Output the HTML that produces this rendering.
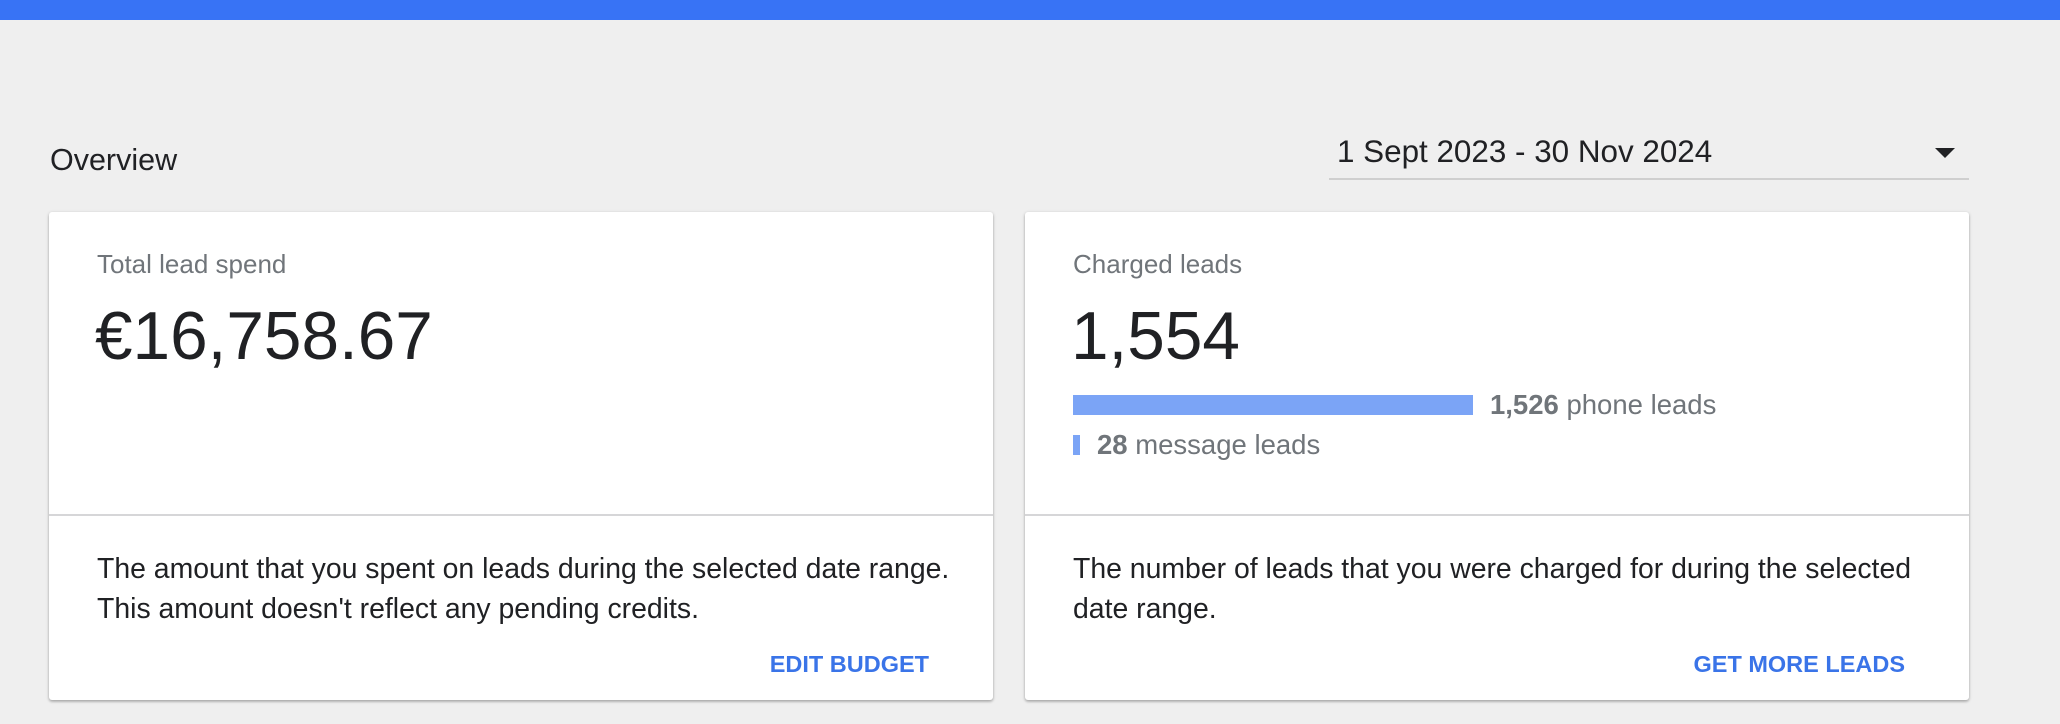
<!DOCTYPE html>
<html><head><meta charset="utf-8"><style>
*{margin:0;padding:0;box-sizing:border-box}
body{width:2060px;height:724px;background:#efefef;font-family:"Liberation Sans",Arial,sans-serif;position:relative;overflow:hidden}
.top{position:absolute;left:0;top:0;width:2060px;height:20px;background:#3873f5}
.abs{position:absolute;white-space:nowrap}
.card{position:absolute;top:212px;height:488px;background:#fff;border-radius:3px;box-shadow:0 1px 3px rgba(0,0,0,.25),0 2px 2px rgba(0,0,0,.12)}
.div{position:absolute;left:0;right:0;top:302px;height:2px;background:#d6d6d8}
.lbl{font-size:26px;color:#70757a}
.big{font-size:67.5px;color:#202124}
.desc{font-size:28.4px;color:#202124;line-height:40px}
.link{font-size:23.5px;color:#3a74e8;font-weight:bold}
.gray{font-size:27.5px;color:#70757a}
</style></head><body>
<div class="top"></div>
<div class="abs" style="left:50px;top:143px;font-size:30.5px;color:#202124">Overview</div>
<div class="abs" style="left:1337px;top:134px;font-size:31.4px;color:#202124">1 Sept 2023 - 30 Nov 2024</div>
<svg class="abs" style="left:1935px;top:148px" width="20" height="10"><path d="M0 0H20L10 10Z" fill="#202124"/></svg>
<div class="abs" style="left:1329px;top:178px;width:640px;height:2px;background:#cfcfcf"></div>

<div class="card" style="left:49px;width:944px">
  <div class="abs lbl" style="left:48px;top:37px">Total lead spend</div>
  <div class="abs big" style="left:46px;top:86px">€16,758.67</div>
  <div class="div"></div>
  <div class="abs desc" style="left:48px;top:337px">The amount that you spent on leads during the selected date range.<br>This amount doesn't reflect any pending credits.</div>
  <div class="abs link" style="right:64px;top:439px">EDIT BUDGET</div>
</div>

<div class="card" style="left:1025px;width:944px">
  <div class="abs lbl" style="left:48px;top:37px">Charged leads</div>
  <div class="abs big" style="left:46px;top:86px">1,554</div>
  <div class="abs" style="left:48px;top:183px;width:400px;height:20px;background:#7ba4f6"></div>
  <div class="abs gray" style="left:465px;top:177px"><b>1,526</b> phone leads</div>
  <div class="abs" style="left:48px;top:223px;width:7px;height:20px;background:#7ba4f6"></div>
  <div class="abs gray" style="left:72px;top:217px"><b>28</b> message leads</div>
  <div class="div"></div>
  <div class="abs desc" style="left:48px;top:337px">The number of leads that you were charged for during the selected<br>date range.</div>
  <div class="abs link" style="right:64px;top:439px">GET MORE LEADS</div>
</div>
</body></html>
